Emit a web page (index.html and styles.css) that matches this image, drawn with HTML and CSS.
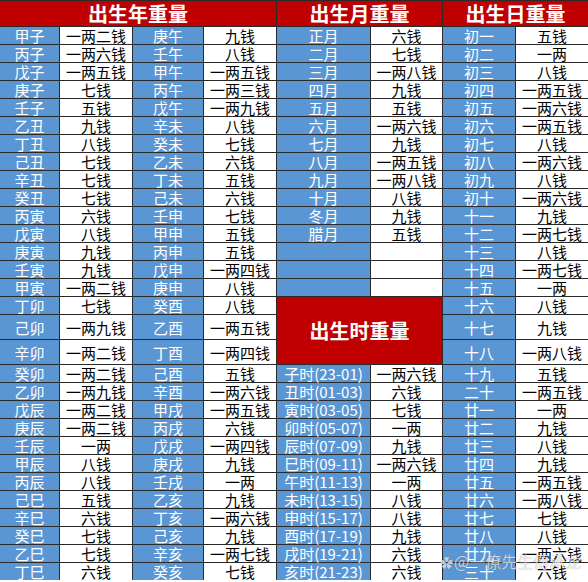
FILE: index.html
```html
<!DOCTYPE html>
<html lang="zh-CN">
<head>
<meta charset="utf-8">
<title>称骨重量表</title>
<link rel="stylesheet" href="styles.css">
</head>
<body>
<div class="sheet">
  <div class="hd span4">出生年重量</div>
  <div class="hd span2">出生月重量</div>
  <div class="hd span2">出生日重量</div>
</div>
<div class="mark"><span class="ico">✿</span>@一僚先生傳承龙</div>
<script>
(function(){
  var L=[["甲子","一两二钱"],["丙子","一两六钱"],["戊子","一两五钱"],["庚子","七钱"],["壬子","五钱"],["乙丑","九钱"],["丁丑","八钱"],["己丑","七钱"],["辛丑","七钱"],["癸丑","七钱"],["丙寅","六钱"],["戊寅","八钱"],["庚寅","九钱"],["壬寅","九钱"],["甲寅","一两二钱"],["丁卯","七钱"],["己卯","一两九钱"],["辛卯","一两二钱"],["癸卯","一两二钱"],["乙卯","一两九钱"],["戊辰","一两二钱"],["庚辰","一两二钱"],["壬辰","一两"],["甲辰","八钱"],["丙辰","八钱"],["己巳","五钱"],["辛巳","六钱"],["癸巳","七钱"],["乙巳","七钱"],["丁巳","六钱"]];
  var R=[["庚午","九钱"],["壬午","八钱"],["甲午","一两五钱"],["丙午","一两三钱"],["戊午","一两九钱"],["辛未","八钱"],["癸未","七钱"],["乙未","六钱"],["丁未","五钱"],["己未","六钱"],["壬申","七钱"],["甲申","五钱"],["丙申","五钱"],["戊申","一两四钱"],["庚申","八钱"],["癸酉","八钱"],["乙酉","一两五钱"],["丁酉","一两四钱"],["己酉","五钱"],["辛酉","一两六钱"],["甲戌","一两五钱"],["丙戌","六钱"],["戊戌","一两四钱"],["庚戌","九钱"],["壬戌","一两"],["乙亥","九钱"],["丁亥","一两六钱"],["己亥","九钱"],["辛亥","一两七钱"],["癸亥","七钱"]];
  var M=[["正月","六钱"],["二月","七钱"],["三月","一两八钱"],["四月","九钱"],["五月","五钱"],["六月","一两六钱"],["七月","九钱"],["八月","一两五钱"],["九月","一两八钱"],["十月","八钱"],["冬月","九钱"],["腊月","五钱"],["",""],["",""],["",""],null,null,null,["子时(23-01)","一两六钱"],["丑时(01-03)","六钱"],["寅时(03-05)","七钱"],["卯时(05-07)","一两"],["辰时(07-09)","九钱"],["巳时(09-11)","一两六钱"],["午时(11-13)","一两"],["未时(13-15)","八钱"],["申时(15-17)","八钱"],["酉时(17-19)","九钱"],["戌时(19-21)","六钱"],["亥时(21-23)","六钱"]];
  var D=[["初一","五钱"],["初二","一两"],["初三","八钱"],["初四","一两五钱"],["初五","一两六钱"],["初六","一两五钱"],["初七","八钱"],["初八","一两六钱"],["初九","八钱"],["初十","一两六钱"],["十一","九钱"],["十二","一两七钱"],["十三","八钱"],["十四","一两七钱"],["十五","一两"],["十六","八钱"],["十七","九钱"],["十八","一两八钱"],["十九","五钱"],["二十","一两五钱"],["廿一","一两"],["廿二","九钱"],["廿三","八钱"],["廿四","九钱"],["廿五","一两五钱"],["廿六","一两八钱"],["廿七","七钱"],["廿八","八钱"],["廿九","一两六钱"],["三十","六钱"]];
  var s=document.querySelector('.sheet');
  function add(cls,t){var d=document.createElement('div');d.className=cls;d.textContent=t;s.appendChild(d);return d;}
  function pair(p,nc){add('nm'+(nc?' '+nc:''),p[0]);add('val',p[1]);}
  for(var i=0;i<30;i++){
    pair(L[i]);pair(R[i]);
    if(i===15){add('hd blk','出生时重量');}
    else if(M[i]){pair(M[i],i>=18?'tm':'');}
    pair(D[i]);
  }
})();
</script>
</body>
</html>
```

FILE: styles.css
```css
html, body {
  margin: 0;
  padding: 0;
  background: #ffffff;
}
body {
  width: 588px;
  height: 582px;
  overflow: hidden;
  position: relative;
  font-family: "Noto Sans CJK SC", "DejaVu Sans", sans-serif;
}
.sheet {
  display: grid;
  grid-template-columns: 59px 72px 70px 72px 93px 71px 72px 72px;
  grid-template-rows: 25px repeat(16, 17px) 24px 24px repeat(12, 17px);
  gap: 1px;
  background: #2a2a2a;
  padding-top: 1px;
  width: 588px;
}
.sheet > div {
  display: flex;
  align-items: center;
  justify-content: center;
  font-size: 15px;
  line-height: 17px;
  white-space: nowrap;
}
.hd {
  background: #c00000;
  color: #ffffff;
  font-weight: 700;
  font-size: 20px !important;
  line-height: 24px !important;
}
.span4 { grid-column: span 4; }
.span2 { grid-column: span 2; }
.blk { grid-column: span 2; grid-row: span 3; }
.nm {
  background: #5b96d4;
  color: #ffffff;
}
.nm.tm {
  font-size: 15px;
}
.val {
  background: #ffffff;
  color: #000000;
}
.mark {
  position: absolute;
  left: 440px;
  top: 550px;
  font-size: 16px;
  line-height: 22px;
  color: rgba(255,255,255,0.72);
  font-family: "Noto Sans CJK SC", sans-serif;
  text-shadow: 0 0 1px rgba(0,0,0,0.35);
  white-space: nowrap;
}
.ico { margin-right: 1px; font-size: 13px; }
```
